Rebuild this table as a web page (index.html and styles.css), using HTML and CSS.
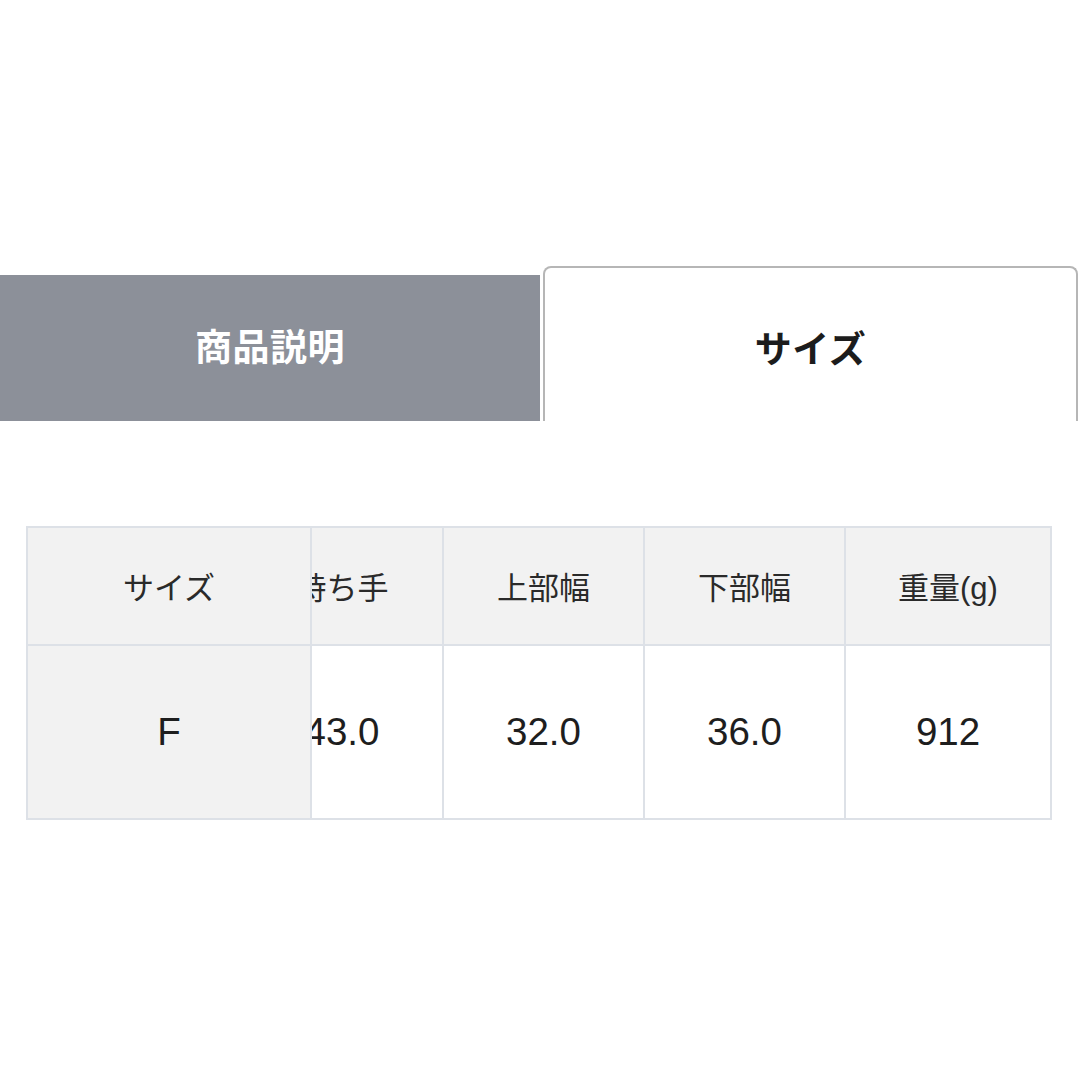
FILE: index.html
```html
<!DOCTYPE html>
<html lang="ja">
<head>
<meta charset="utf-8">
<title>サイズ</title>
<link rel="stylesheet" href="styles.css">
</head>
<body>
<div class="page">
  <div class="tabs">
    <div class="tab tab-inactive">商品説明</div>
    <div class="tab tab-active">サイズ</div>
  </div>
  <div class="size-table">
    <div class="cell head sticky">サイズ</div>
    <div class="cell head scrolled"><span class="inner">持ち手</span></div>
    <div class="cell head">上部幅</div>
    <div class="cell head">下部幅</div>
    <div class="cell head last-col">重量(g)</div>
    <div class="cell body sticky last-row">F</div>
    <div class="cell body scrolled last-row"><span class="inner">43.0</span></div>
    <div class="cell body last-row">32.0</div>
    <div class="cell body last-row">36.0</div>
    <div class="cell body last-row last-col">912</div>
  </div>
</div>
</body>
</html>
```

FILE: styles.css
```css
html, body {
  margin: 0;
  padding: 0;
  background: #ffffff;
}

body {
  font-family: "Liberation Sans", "Noto Sans CJK JP", sans-serif;
  color: #222222;
}

.page {
  width: 1080px;
  height: 1080px;
  padding-top: 266px;
  box-sizing: border-box;
}

.tabs {
  display: flex;
  align-items: flex-end;
  gap: 3px;
  height: 155px;
}

.tab {
  display: flex;
  align-items: center;
  justify-content: center;
  box-sizing: border-box;
  font-family: "Noto Sans CJK JP", sans-serif;
  font-weight: 700;
  font-size: 37px;
  letter-spacing: 0.5px;
}

.tab-inactive {
  width: 540px;
  height: 146px;
  background: #8c9099;
  color: #ffffff;
  padding-bottom: 6px;
}

.tab-active {
  width: 535px;
  height: 155px;
  background: #ffffff;
  color: #1c1c1c;
  border: 2px solid #b6b6b6;
  border-bottom: none;
  border-radius: 8px 8px 0 0;
  padding-top: 4px;
}

.size-table {
  margin: 105px 0 0 26px;
  width: 1026px;
  box-sizing: border-box;
  border: 2px solid #dde1e7;
  display: grid;
  grid-template-columns: 284px 132px 201px 201px 204px;
  grid-template-rows: 118px 172px;
}

.cell {
  display: flex;
  align-items: center;
  justify-content: center;
  border-right: 2px solid #dde1e7;
  border-bottom: 2px solid #dde1e7;
  min-width: 0;
}

.cell.last-col {
  border-right: none;
}

.cell.last-row {
  border-bottom: none;
}

.head {
  background: #f2f2f2;
  font-size: 31px;
  color: #2a2a2a;
  padding-bottom: 2px;
}

.body {
  background: #ffffff;
  font-size: 38.5px;
  color: #1e1e1e;
}

.sticky {
  background: #f2f2f2;
  position: relative;
  z-index: 1;
}

.scrolled {
  justify-content: flex-end;
}

.scrolled .inner {
  flex-shrink: 0;
  width: 200px;
  text-align: center;
}
```
